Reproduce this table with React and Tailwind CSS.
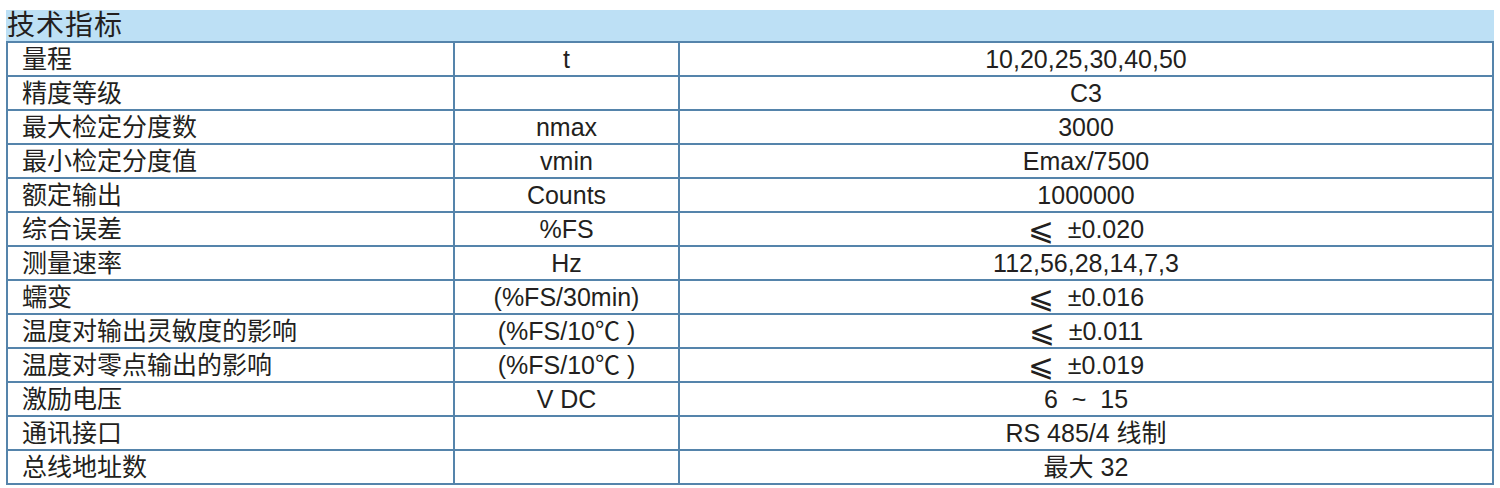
import React from "react";

const le = (v) => (
  <>
    <span className="text-[31px] align-[-2px]">⩽</span>
    {"  ±" + v}
  </>
);

const rows = [
  ["量程", "t", "10,20,25,30,40,50"],
  ["精度等级", "", "C3"],
  ["最大检定分度数", "nmax", "3000"],
  ["最小检定分度值", "vmin", "Emax/7500"],
  ["额定输出", "Counts", "1000000"],
  ["综合误差", "%FS", le("0.020")],
  ["测量速率", "Hz", "112,56,28,14,7,3"],
  ["蠕变", "(%FS/30min)", le("0.016")],
  ["温度对输出灵敏度的影响", "(%FS/10℃ )", le("0.011")],
  ["温度对零点输出的影响", "(%FS/10℃ )", le("0.019")],
  ["激励电压", "V DC", "6  ~  15"],
  ["通讯接口", "", "RS 485/4 线制"],
  ["总线地址数", "", "最大 32"],
];

export default function App() {
  return (
    <div
      className="w-[1500px] h-[488px] bg-white pt-[10px] px-[6px] text-[#231f20] overflow-hidden"
      style={{ fontFamily: '"Liberation Sans", "Noto Sans CJK SC", sans-serif' }}
    >
      <div className="bg-[#bde0f5] h-[31px] flex items-center">
        <h1 className="text-[28px] leading-none pl-[1px] tracking-[1px]">技术指标</h1>
      </div>
      <table className="w-full table-fixed border-collapse border-2 border-[#5584ab]">
        <colgroup>
          <col className="w-[447px]" />
          <col className="w-[225px]" />
          <col />
        </colgroup>
        <tbody>
          {rows.map((r, i) => (
            <tr key={i} className="h-[34px]">
              <td className="border-2 border-[#5584ab] pl-[14px] text-[25px] leading-none whitespace-pre">{r[0]}</td>
              <td className="border-2 border-[#5584ab] text-center text-[25px] leading-none whitespace-pre">{r[1]}</td>
              <td className="border-2 border-[#5584ab] text-center text-[25px] leading-none whitespace-pre">{r[2]}</td>
            </tr>
          ))}
        </tbody>
      </table>
    </div>
  );
}
